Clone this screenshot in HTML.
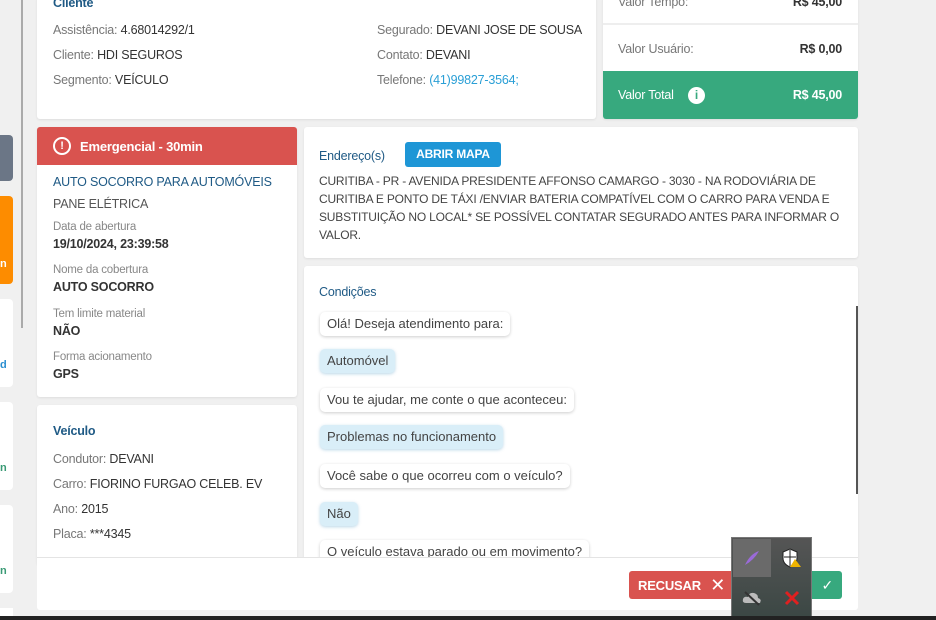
<!DOCTYPE html>
<html><head><meta charset="utf-8"><style>
*{box-sizing:border-box;margin:0;padding:0}
body{width:936px;height:620px;background:#f0f0f0;font-family:"Liberation Sans",sans-serif;font-size:12.5px;color:#333;position:relative;overflow:hidden;letter-spacing:-0.2px}
.a{position:absolute}
.card{position:absolute;background:#fff;border-radius:3px;box-shadow:0 1px 2px rgba(0,0,0,.08)}
.lbl{color:#777}
.h{color:#1f5a85;font-weight:bold;font-size:12.5px}
.bub{position:absolute;left:16px;height:24px;line-height:24px;padding:0 7px;border-radius:5px;background:#fff;box-shadow:0 1px 3px rgba(0,0,0,.2);color:#444;font-size:13px;letter-spacing:0}
.bub.b{background:#d9eef8;box-shadow:0 1px 3px rgba(60,140,190,.35)}
.sm{font-size:11.5px;color:#888}
.v{font-weight:bold;color:#333}
</style></head><body>
<!-- left sidebar -->
<div class="a" style="left:21px;top:0;width:2px;height:328px;background:#aaa"></div>
<div class="a" style="left:0;top:135px;width:13px;height:46px;background:#6b7686;border-radius:0 4px 4px 0"></div>
<div class="a" style="left:0;top:196px;width:13px;height:88px;background:#fd8c00;border-radius:0 4px 4px 0;color:#fff;font-weight:bold;font-size:11px;padding-top:62px">n</div>
<div class="a" style="left:0;top:299px;width:13px;height:88px;background:#fff;border-radius:0 4px 4px 0;color:#2a8ed0;font-weight:bold;font-size:11px;padding-top:60px">d</div>
<div class="a" style="left:0;top:402px;width:13px;height:88px;background:#fff;border-radius:0 4px 4px 0;color:#3a9a75;font-weight:bold;font-size:11px;padding-top:60px">n</div>
<div class="a" style="left:0;top:505px;width:13px;height:88px;background:#fff;border-radius:0 4px 4px 0;color:#3a9a75;font-weight:bold;font-size:11px;padding-top:60px">n</div>
<div class="a" style="left:0;top:608px;width:13px;height:10px;background:#fff"></div>

<!-- Cliente -->
<div class="card" style="left:37px;top:-4px;width:559px;height:123px">
 <div class="a h" style="left:16px;top:0px">Cliente</div>
 <div class="a" style="left:16px;top:27px"><span class="lbl">Assistência:</span> 4.68014292/1</div>
 <div class="a" style="left:16px;top:52px"><span class="lbl">Cliente:</span> HDI SEGUROS</div>
 <div class="a" style="left:16px;top:77px"><span class="lbl">Segmento:</span> VEÍCULO</div>
 <div class="a" style="left:340px;top:27px"><span class="lbl">Segurado:</span> DEVANI JOSE DE SOUSA</div>
 <div class="a" style="left:340px;top:52px"><span class="lbl">Contato:</span> DEVANI</div>
 <div class="a" style="left:340px;top:77px"><span class="lbl">Telefone:</span> <span style="color:#2a9fd6">(41)99827-3564;</span></div>
</div>

<!-- valores -->
<div class="card" style="left:603px;top:-4px;width:255px;height:123px;overflow:hidden">
 <div class="a lbl" style="left:15px;top:-1px">Valor Tempo:</div>
 <div class="a v" style="right:16px;top:-1px">R$ 45,00</div>
 <div class="a" style="left:0;top:27px;width:255px;height:2px;background:#eee"></div>
 <div class="a lbl" style="left:15px;top:46px">Valor Usuário:</div>
 <div class="a v" style="right:16px;top:46px">R$ 0,00</div>
 <div class="a" style="left:0;top:75px;width:255px;height:48px;background:#37a97e;color:#fff">
  <div class="a" style="left:15px;top:17px">Valor Total</div>
  <div class="a" style="left:85px;top:16px;width:17px;height:17px;border-radius:50%;background:#fff;color:#37a97e;font-weight:bold;text-align:center;line-height:17px;font-size:12px">i</div>
  <div class="a" style="right:16px;top:17px;font-weight:bold">R$ 45,00</div>
 </div>
</div>

<!-- Emergencial -->
<div class="card" style="left:37px;top:127px;width:260px;height:270px;overflow:hidden">
 <div class="a" style="left:0;top:0;width:260px;height:38px;background:#d9534f;color:#fff;font-weight:bold;font-size:13px">
  <div class="a" style="left:16px;top:10px;width:18px;height:18px;border:2px solid #fff;border-radius:50%;text-align:center;line-height:14px;font-size:11px">!</div>
  <div class="a" style="left:43px;top:12px">Emergencial - 30min</div>
 </div>
 <div class="a" style="left:16px;top:48px;color:#1f5a85">AUTO SOCORRO PARA AUTOMÓVEIS</div>
 <div class="a" style="left:16px;top:70px;color:#555">PANE ELÉTRICA</div>
 <div class="a sm" style="left:16px;top:94px">Data de abertura</div>
 <div class="a v" style="left:16px;top:110px">19/10/2024, 23:39:58</div>
 <div class="a sm" style="left:16px;top:137px">Nome da cobertura</div>
 <div class="a v" style="left:16px;top:153px">AUTO SOCORRO</div>
 <div class="a sm" style="left:16px;top:181px">Tem limite material</div>
 <div class="a v" style="left:16px;top:197px">NÃO</div>
 <div class="a sm" style="left:16px;top:224px">Forma acionamento</div>
 <div class="a v" style="left:16px;top:240px">GPS</div>
</div>

<!-- Veiculo -->
<div class="card" style="left:37px;top:405px;width:260px;height:160px">
 <div class="a h" style="left:16px;top:19px">Veículo</div>
 <div class="a" style="left:16px;top:47px"><span class="lbl">Condutor:</span> DEVANI</div>
 <div class="a" style="left:16px;top:72px"><span class="lbl">Carro:</span> FIORINO FURGAO CELEB. EV</div>
 <div class="a" style="left:16px;top:97px"><span class="lbl">Ano:</span> 2015</div>
 <div class="a" style="left:16px;top:122px"><span class="lbl">Placa:</span> ***4345</div>
</div>

<!-- Endereco -->
<div class="card" style="left:304px;top:127px;width:554px;height:131px">
 <div class="a h" style="left:15px;top:22px;font-weight:normal">Endereço(s)</div>
 <div class="a" style="left:101px;top:15px;width:96px;height:25px;background:#1e96d6;color:#fff;font-weight:bold;border-radius:3px;text-align:center;line-height:25px;font-size:12px">ABRIR MAPA</div>
 <div class="a" style="left:15px;top:45px;width:530px;line-height:18px;color:#444;font-size:12px">CURITIBA - PR - AVENIDA PRESIDENTE AFFONSO CAMARGO - 3030 - NA RODOVIÁRIA DE CURITIBA E PONTO DE TÁXI /ENVIAR BATERIA COMPATÍVEL COM O CARRO PARA VENDA E SUBSTITUIÇÃO NO LOCAL* SE POSSÍVEL CONTATAR SEGURADO ANTES PARA INFORMAR O VALOR.</div>
</div>

<!-- Condicoes -->
<div class="card" style="left:304px;top:266px;width:554px;height:300px;overflow:hidden">
 <div class="a h" style="left:15px;top:19px;font-weight:normal">Condições</div>
 <div class="bub" style="top:46px">Olá! Deseja atendimento para:</div>
 <div class="bub b" style="top:83px">Automóvel</div>
 <div class="bub" style="top:122px">Vou te ajudar, me conte o que aconteceu:</div>
 <div class="bub b" style="top:159px">Problemas no funcionamento</div>
 <div class="bub" style="top:198px">Você sabe o que ocorreu com o veículo?</div>
 <div class="bub b" style="top:236px">Não</div>
 <div class="bub" style="top:274px">O veículo estava parado ou em movimento?</div>
 <div class="a" style="left:552px;top:40px;width:2px;height:188px;background:#555"></div>
</div>

<!-- footer -->
<div class="a" style="left:37px;top:557px;width:821px;height:53px;background:#fff;border-top:1px solid #e4e4e4;border-radius:0 0 3px 3px"></div>
<div class="a" style="left:629px;top:571px;width:110px;height:28px;background:#d9534f;border-radius:3px;color:#fff;font-weight:bold;font-size:13px;line-height:28px;padding-left:9px">RECUSAR <span style="font-weight:normal;font-size:18px;margin-left:6px;vertical-align:-1px">✕</span></div>
<div class="a" style="left:800px;top:571px;width:42px;height:28px;background:#37a97e;border-radius:3px;color:#fff;text-align:right;padding-right:9px;line-height:28px;font-size:14px">✓</div>

<!-- tray popup -->
<div class="a" style="left:731px;top:537px;width:81px;height:83px;background:linear-gradient(#555,#3b4744);border:1px solid #777">
 <div class="a" style="left:1px;top:1px;width:38px;height:38px;background:#6a6a6a"></div>
 <svg class="a" style="left:10px;top:10px" width="20" height="20"><path d="M3 17 Q8 6 17 3 Q12 12 3 17Z" fill="#9a6ad8"/></svg>
 <svg class="a" style="left:50px;top:10px" width="20" height="20"><path d="M8 1 L15 4 V10 Q15 16 8 19 Q1 16 1 10 V4Z" fill="#fff" stroke="#222"/><path d="M8 2V18M2 9H14" stroke="#222"/><path d="M13 11 L19 19 H8Z" fill="#f0b400"/></svg>
 <svg class="a" style="left:10px;top:52px" width="20" height="16"><path d="M4 13 Q0 13 1 9 Q2 6 6 7 Q7 2 12 3 Q16 4 16 8 Q20 9 18 13Z" fill="#bbb"/><path d="M3 2 L17 15" stroke="#333" stroke-width="2"/></svg>
 <svg class="a" style="left:51px;top:51px" width="18" height="18"><path d="M3 3 L15 15 M15 3 L3 15" stroke="#e02020" stroke-width="3"/></svg>
</div>
<div class="a" style="left:0;top:616px;width:936px;height:4px;background:#222"></div>
</body></html>
